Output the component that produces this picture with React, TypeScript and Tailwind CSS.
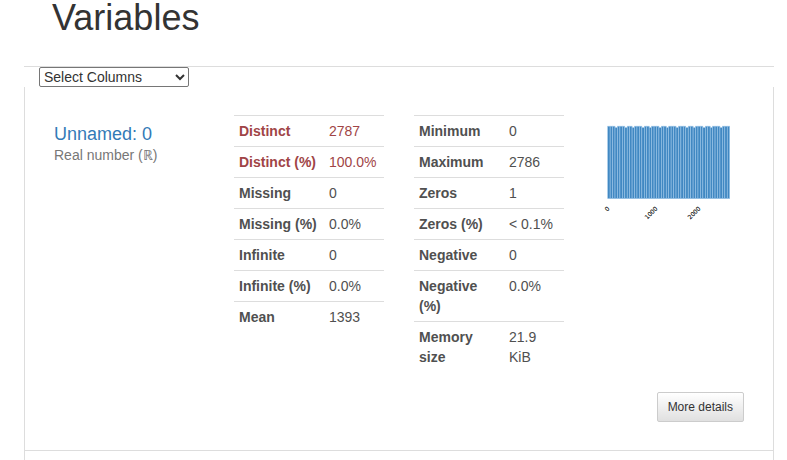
import React from "react";

type Stat = { label: string; value: string; alert?: boolean };

const leftStats: Stat[] = [
  { label: "Distinct", value: "2787", alert: true },
  { label: "Distinct (%)", value: "100.0%", alert: true },
  { label: "Missing", value: "0" },
  { label: "Missing (%)", value: "0.0%" },
  { label: "Infinite", value: "0" },
  { label: "Infinite (%)", value: "0.0%" },
  { label: "Mean", value: "1393" },
];

const rightStats: Stat[] = [
  { label: "Minimum", value: "0" },
  { label: "Maximum", value: "2786" },
  { label: "Zeros", value: "1" },
  { label: "Zeros (%)", value: "< 0.1%" },
  { label: "Negative", value: "0" },
  { label: "Negative (%)", value: "0.0%" },
  { label: "Memory size", value: "21.9 KiB" },
];

function StatTable({ stats }: { stats: Stat[] }) {
  return (
    <table className="w-full table-fixed border-collapse text-sm leading-5">
      <tbody>
        {stats.map((s) => (
          <tr
            key={s.label}
            className={
              "border-t border-[#ddd] align-top " +
              (s.alert ? "text-[#a04446]" : "text-[#505050]")
            }
          >
            <th scope="row" className="w-3/5 p-[5px] text-left font-bold">
              {s.label}
            </th>
            <td className="p-[5px]">{s.value}</td>
          </tr>
        ))}
      </tbody>
    </table>
  );
}

// Bins that hold one value fewer than the others.
const shortBins = [3, 7, 10, 14, 17, 21, 24, 28, 32, 35, 39, 42, 46];
const binWidth = 122 / 50;
const ticks = [
  { text: "0", x: 16, y: 94 },
  { text: "1000", x: 64, y: 94 },
  { text: "2000", x: 107, y: 94 },
];

function Histogram() {
  return (
    <svg
      viewBox="0 0 150 112"
      className="block w-full"
      role="img"
      aria-label="Histogram of Unnamed: 0"
    >
      {Array.from({ length: 50 }, (_, i) => {
        const top = shortBins.includes(i) ? 12.6 : 11.2;
        return (
          <rect
            key={i}
            x={13.7 + i * binWidth}
            y={top}
            width={binWidth}
            height={83.6 - top}
            fill="#4188c2"
            stroke="#9cc6e8"
            strokeWidth="0.6"
          />
        );
      })}
      {ticks.map((t) => (
        <text
          key={t.text}
          x={t.x}
          y={t.y}
          textAnchor="end"
          transform={`rotate(-45 ${t.x} ${t.y})`}
          className="fill-black stroke-black font-['DejaVu_Sans',sans-serif] text-[6px]"
          strokeWidth="0.1"
        >
          {t.text}
        </text>
      ))}
    </svg>
  );
}

export default function App() {
  return (
    <main className="flex min-h-screen flex-col bg-white pr-[13px] pl-6 font-['Liberation_Sans',Arial,sans-serif] text-sm leading-5 text-[#333]">
      <h1 className="pb-[30px] pl-7 text-4xl leading-9">Variables</h1>
      <div className="flex border-t border-[#ddd] pl-[15px]">
        <select
          aria-label="Select Columns"
          defaultValue=""
          className="h-5 w-[150px] rounded-xs border border-[#767676] bg-white text-sm text-[#333]"
        >
          <option value="">Select Columns</option>
          <option value="unnamed">Unnamed: 0</option>
        </select>
      </div>
      <section className="flex-1 border-x border-[#ddd]">
        <div className="border-b border-[#ddd] px-[14px] py-7">
          <div className="grid grid-cols-4">
            <div className="px-[15px] pt-2">
              <h2 className="text-lg leading-[22px]">
                <a href="#unnamed" className="text-[#337ab7]">
                  Unnamed: 0
                </a>
              </h2>
              <p className="text-[#777]">Real number (ℝ)</p>
            </div>
            <div className="px-[15px]">
              <StatTable stats={leftStats} />
            </div>
            <div className="px-[15px]">
              <StatTable stats={rightStats} />
            </div>
            <div className="px-[15px]">
              <Histogram />
            </div>
          </div>
          <div className="flex justify-end px-[15px] pt-5">
            <button
              type="button"
              className="rounded-xs border border-[#ccc] bg-linear-to-b from-white to-[#e0e0e0] px-[10px] py-[5px] text-xs leading-[18px] text-[#333]"
            >
              More details
            </button>
          </div>
        </div>
      </section>
    </main>
  );
}
